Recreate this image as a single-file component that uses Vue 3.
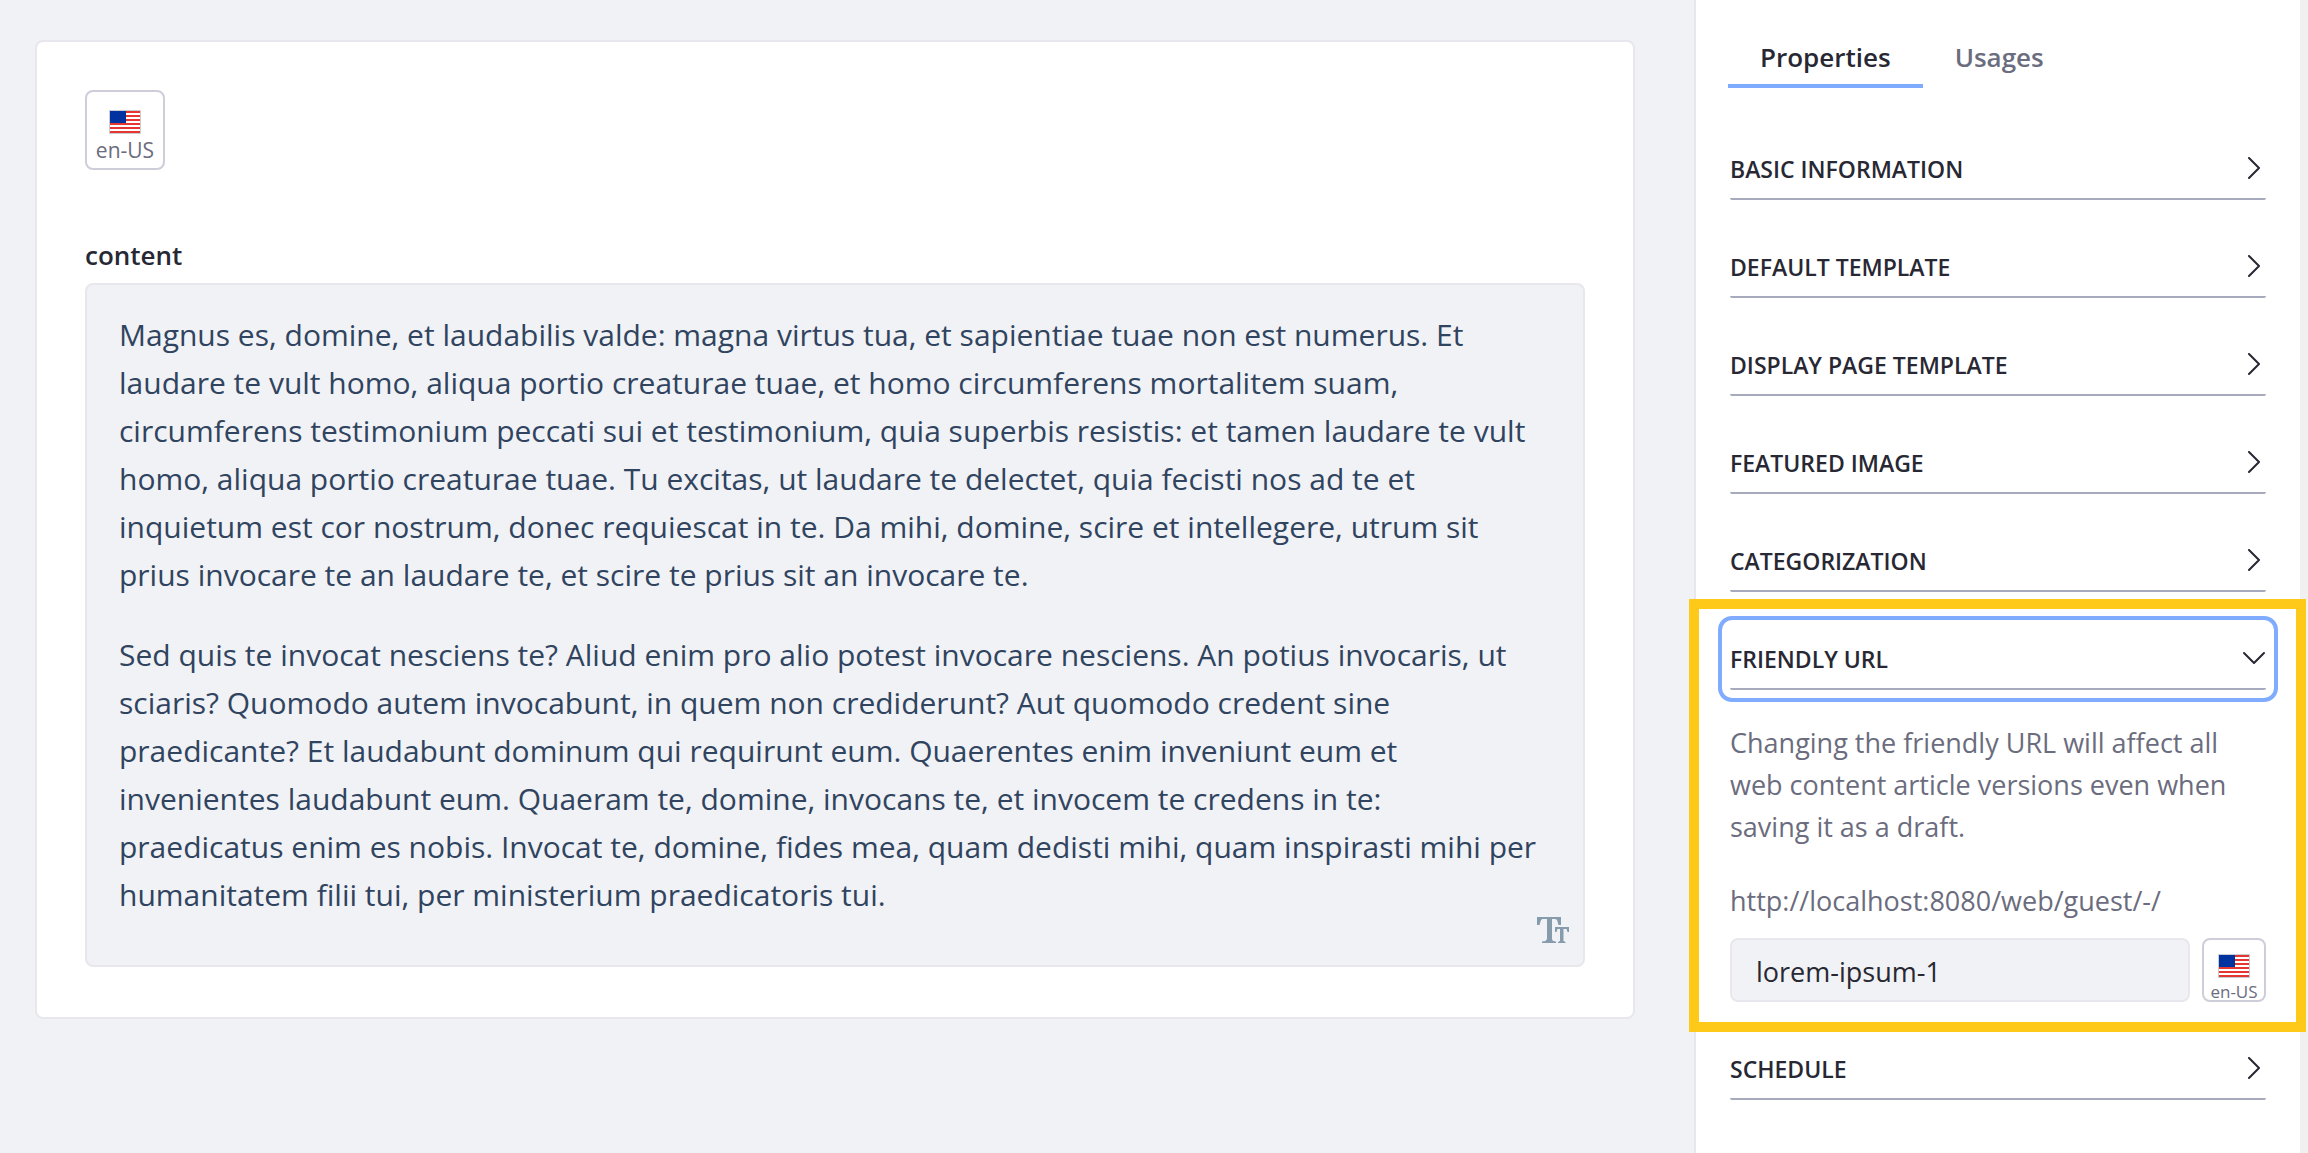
<script setup>
import { ref } from 'vue'

const tabs = ['Properties', 'Usages']
const activeTab = ref('Properties')
const sections = [
  'Basic Information',
  'Default Template',
  'Display Page Template',
  'Featured Image',
  'Categorization',
  'Friendly URL',
  'Schedule'
]
const open = ref('Friendly URL')
const slug = ref('lorem-ipsum-1')
const stripes = [1, 5, 9, 13, 17, 21]

function toggle(name) {
  open.value = open.value === name ? '' : name
}
</script>

<template>
  <div class="page">
    <main class="main">
      <div class="card">
        <button type="button" class="locale locale-lg">
          <svg class="flag" viewBox="0 0 32 24" aria-hidden="true">
            <rect width="32" height="24" fill="#c9ccd1" />
            <rect x="1" y="1" width="30" height="22" fill="#fff" />
            <rect v-for="y in stripes" :key="y" x="1" :y="y" width="30" height="2" fill="#e53632" />
            <rect x="1" y="1" width="16" height="12" fill="#0033a0" />
          </svg>
          <span>en-US</span>
        </button>
        <div id="content-label" class="label">content</div>
        <div class="editor">
          <div class="editor-text" contenteditable="true" role="textbox" aria-multiline="true" aria-labelledby="content-label" spellcheck="false">
            <p>Magnus es, domine, et laudabilis valde: magna virtus tua, et sapientiae tuae non est numerus. Et laudare te vult homo, aliqua portio creaturae tuae, et homo circumferens mortalitem suam, circumferens testimonium peccati sui et testimonium, quia superbis resistis: et tamen laudare te vult homo, aliqua portio creaturae tuae. Tu excitas, ut laudare te delectet, quia fecisti nos ad te et inquietum est cor nostrum, donec requiescat in te. Da mihi, domine, scire et intellegere, utrum sit prius invocare te an laudare te, et scire te prius sit an invocare te.</p>
            <p>Sed quis te invocat nesciens te? Aliud enim pro alio potest invocare nesciens. An potius invocaris, ut sciaris? Quomodo autem invocabunt, in quem non crediderunt? Aut quomodo credent sine praedicante? Et laudabunt dominum qui requirunt eum. Quaerentes enim inveniunt eum et invenientes laudabunt eum. Quaeram te, domine, invocans te, et invocem te credens in te: praedicatus enim es nobis. Invocat te, domine, fides mea, quam dedisti mihi, quam inspirasti mihi per humanitatem filii tui, per ministerium praedicatoris tui.</p>
          </div>
          <svg class="text-icon" viewBox="0 0 32 26" aria-hidden="true">
            <path fill="#869cad" d="M0 0H24V8H21.500L20 3L18.500 2H15V22L16 24L19 24.500V26H5V24.500L8.500 24L10 22V2H5.500L4 3L2.500 8H0Z" />
            <path fill="#869cad" stroke="#f1f2f5" stroke-width="1" paint-order="stroke" d="M18 10H32V15H30.500L29.500 12H26.500V24L28.500 25V26H21V25L23 24V12H20.500L19.500 15H18Z" />
          </svg>
        </div>
      </div>
    </main>

    <aside class="sidebar">
      <nav class="tabs" role="tablist">
        <button
          v-for="tab in tabs"
          :key="tab"
          type="button"
          role="tab"
          class="tab"
          :class="{ active: tab === activeTab }"
          :aria-selected="tab === activeTab"
          @click="activeTab = tab"
        >{{ tab }}</button>
      </nav>

      <div class="sections">
        <section v-for="name in sections" :key="name" class="section" :class="{ open: name === open }">
          <button type="button" class="section-head" :aria-expanded="name === open" @click="toggle(name)">
            <span>{{ name }}</span>
            <svg class="chevron" viewBox="0 0 24 24" aria-hidden="true">
              <path v-if="name === open" d="M2 6L12 16L22 6" />
              <path v-else d="M7 1L17 11L7 21" />
            </svg>
          </button>
          <div v-if="name === open && name === 'Friendly URL'" class="section-body">
            <p class="help">Changing the friendly URL will affect all web content article versions even when saving it as a draft.</p>
            <label class="prefix" for="friendly-url">http://localhost:8080/web/guest/-/</label>
            <div class="field">
              <input id="friendly-url" v-model="slug" type="text" class="input" spellcheck="false" />
              <button type="button" class="locale locale-sm">
                <svg class="flag" viewBox="0 0 32 24" aria-hidden="true">
                  <rect width="32" height="24" fill="#c9ccd1" />
                  <rect x="1" y="1" width="30" height="22" fill="#fff" />
                  <rect v-for="y in stripes" :key="y" x="1" :y="y" width="30" height="2" fill="#e53632" />
                  <rect x="1" y="1" width="16" height="12" fill="#0033a0" />
                </svg>
                <span>en-US</span>
              </button>
            </div>
          </div>
        </section>
      </div>
    </aside>
  </div>
</template>

<style>
body {
  margin: 0;
  background: #f1f2f5;
}
</style>

<style scoped>
.page {
  box-sizing: border-box;
  display: flex;
  min-height: 100vh;
  background: #f1f2f5;
  color: #272833;
  font-family: "Open Sans", "Noto Sans", sans-serif;
}
.page *,
.page *::after {
  box-sizing: border-box;
}
button,
input {
  font-family: inherit;
}
p {
  margin: 0;
}
.main {
  flex: 1;
  min-width: 0;
  padding: 40px 59px 40px 35px;
}
.card {
  padding: 48px 48px 50px;
  border: 2px solid #e7e7ed;
  border-radius: 8px;
  background: #fff;
}
.locale {
  display: flex;
  flex-direction: column;
  align-items: center;
  flex: none;
  padding: 0;
  border: 2px solid #cdced9;
  border-radius: 8px;
  background: #fff;
  color: #6b6c7e;
}
.locale-lg {
  width: 80px;
  height: 80px;
  padding-top: 18px;
  font-size: 21px;
  line-height: 32px;
}
.locale-sm {
  width: 64px;
  height: 64px;
  padding-top: 14px;
  font-size: 17px;
  line-height: 28px;
}
.flag {
  display: block;
  flex: none;
  width: 32px;
  height: 24px;
}
.label {
  margin-top: 67px;
  font-size: 26px;
  font-weight: 600;
  line-height: 36px;
}
.editor {
  position: relative;
  margin-top: 10px;
  padding: 26px 32px 46px;
  border: 2px solid #e7e7ed;
  border-radius: 8px;
  background: #f1f2f5;
}
.editor-text {
  outline: none;
  color: #30445f;
  font-size: 30px;
  line-height: 48px;
}
.editor-text p + p {
  margin-top: 32px;
}
.text-icon {
  position: absolute;
  right: 14px;
  bottom: 22px;
  width: 32px;
  height: 26px;
}
.sidebar {
  flex: none;
  width: 614px;
  padding: 26px 34px 40px 32px;
  border-left: 2px solid #e7e7ed;
  border-right: 8px solid #f0f0f0;
  background: #fff;
}
.tabs {
  display: flex;
}
.tab {
  height: 62px;
  padding: 4px 32px 0;
  border: 0;
  border-bottom: 4px solid transparent;
  background: none;
  color: #6b6c7e;
  font-size: 26px;
  font-weight: 600;
}
.tab.active {
  border-bottom-color: #80acff;
  color: #272833;
}
.sections {
  display: flex;
  flex-direction: column;
  gap: 36px;
  margin-top: 50px;
  padding-left: 2px;
}
.section {
  position: relative;
}
.section-head {
  display: flex;
  align-items: center;
  justify-content: space-between;
  width: 100%;
  height: 62px;
  padding: 0;
  border: 2px solid transparent;
  border-width: 2px 0;
  border-bottom-color: #a7a9bc;
  border-radius: 2px;
  background: none;
  color: #272833;
  font-size: 23px;
  font-weight: 600;
  text-transform: uppercase;
}
.open .section-head {
  outline: 4px solid #80acff;
  outline-offset: 8px;
}
.open::after {
  content: "";
  position: absolute;
  inset: -29px -40px -30px -41px;
  border: 10px solid #ffc919;
  pointer-events: none;
}
.chevron {
  width: 24px;
  height: 24px;
  fill: none;
  stroke: #272833;
  stroke-width: 2;
  stroke-linecap: round;
  stroke-linejoin: round;
}
.section-body {
  padding-top: 32px;
  color: #6b6c7e;
  font-size: 27px;
  line-height: 42px;
}
.prefix {
  display: block;
  margin-top: 32px;
  margin-bottom: 16px;
}
.field {
  display: flex;
  gap: 12px;
}
.input {
  flex: 1;
  min-width: 0;
  height: 64px;
  padding: 2px 24px 0;
  border: 2px solid #e7e7ed;
  border-radius: 8px;
  background: #f1f2f5;
  color: #272833;
  font-size: 27px;
}
</style>
